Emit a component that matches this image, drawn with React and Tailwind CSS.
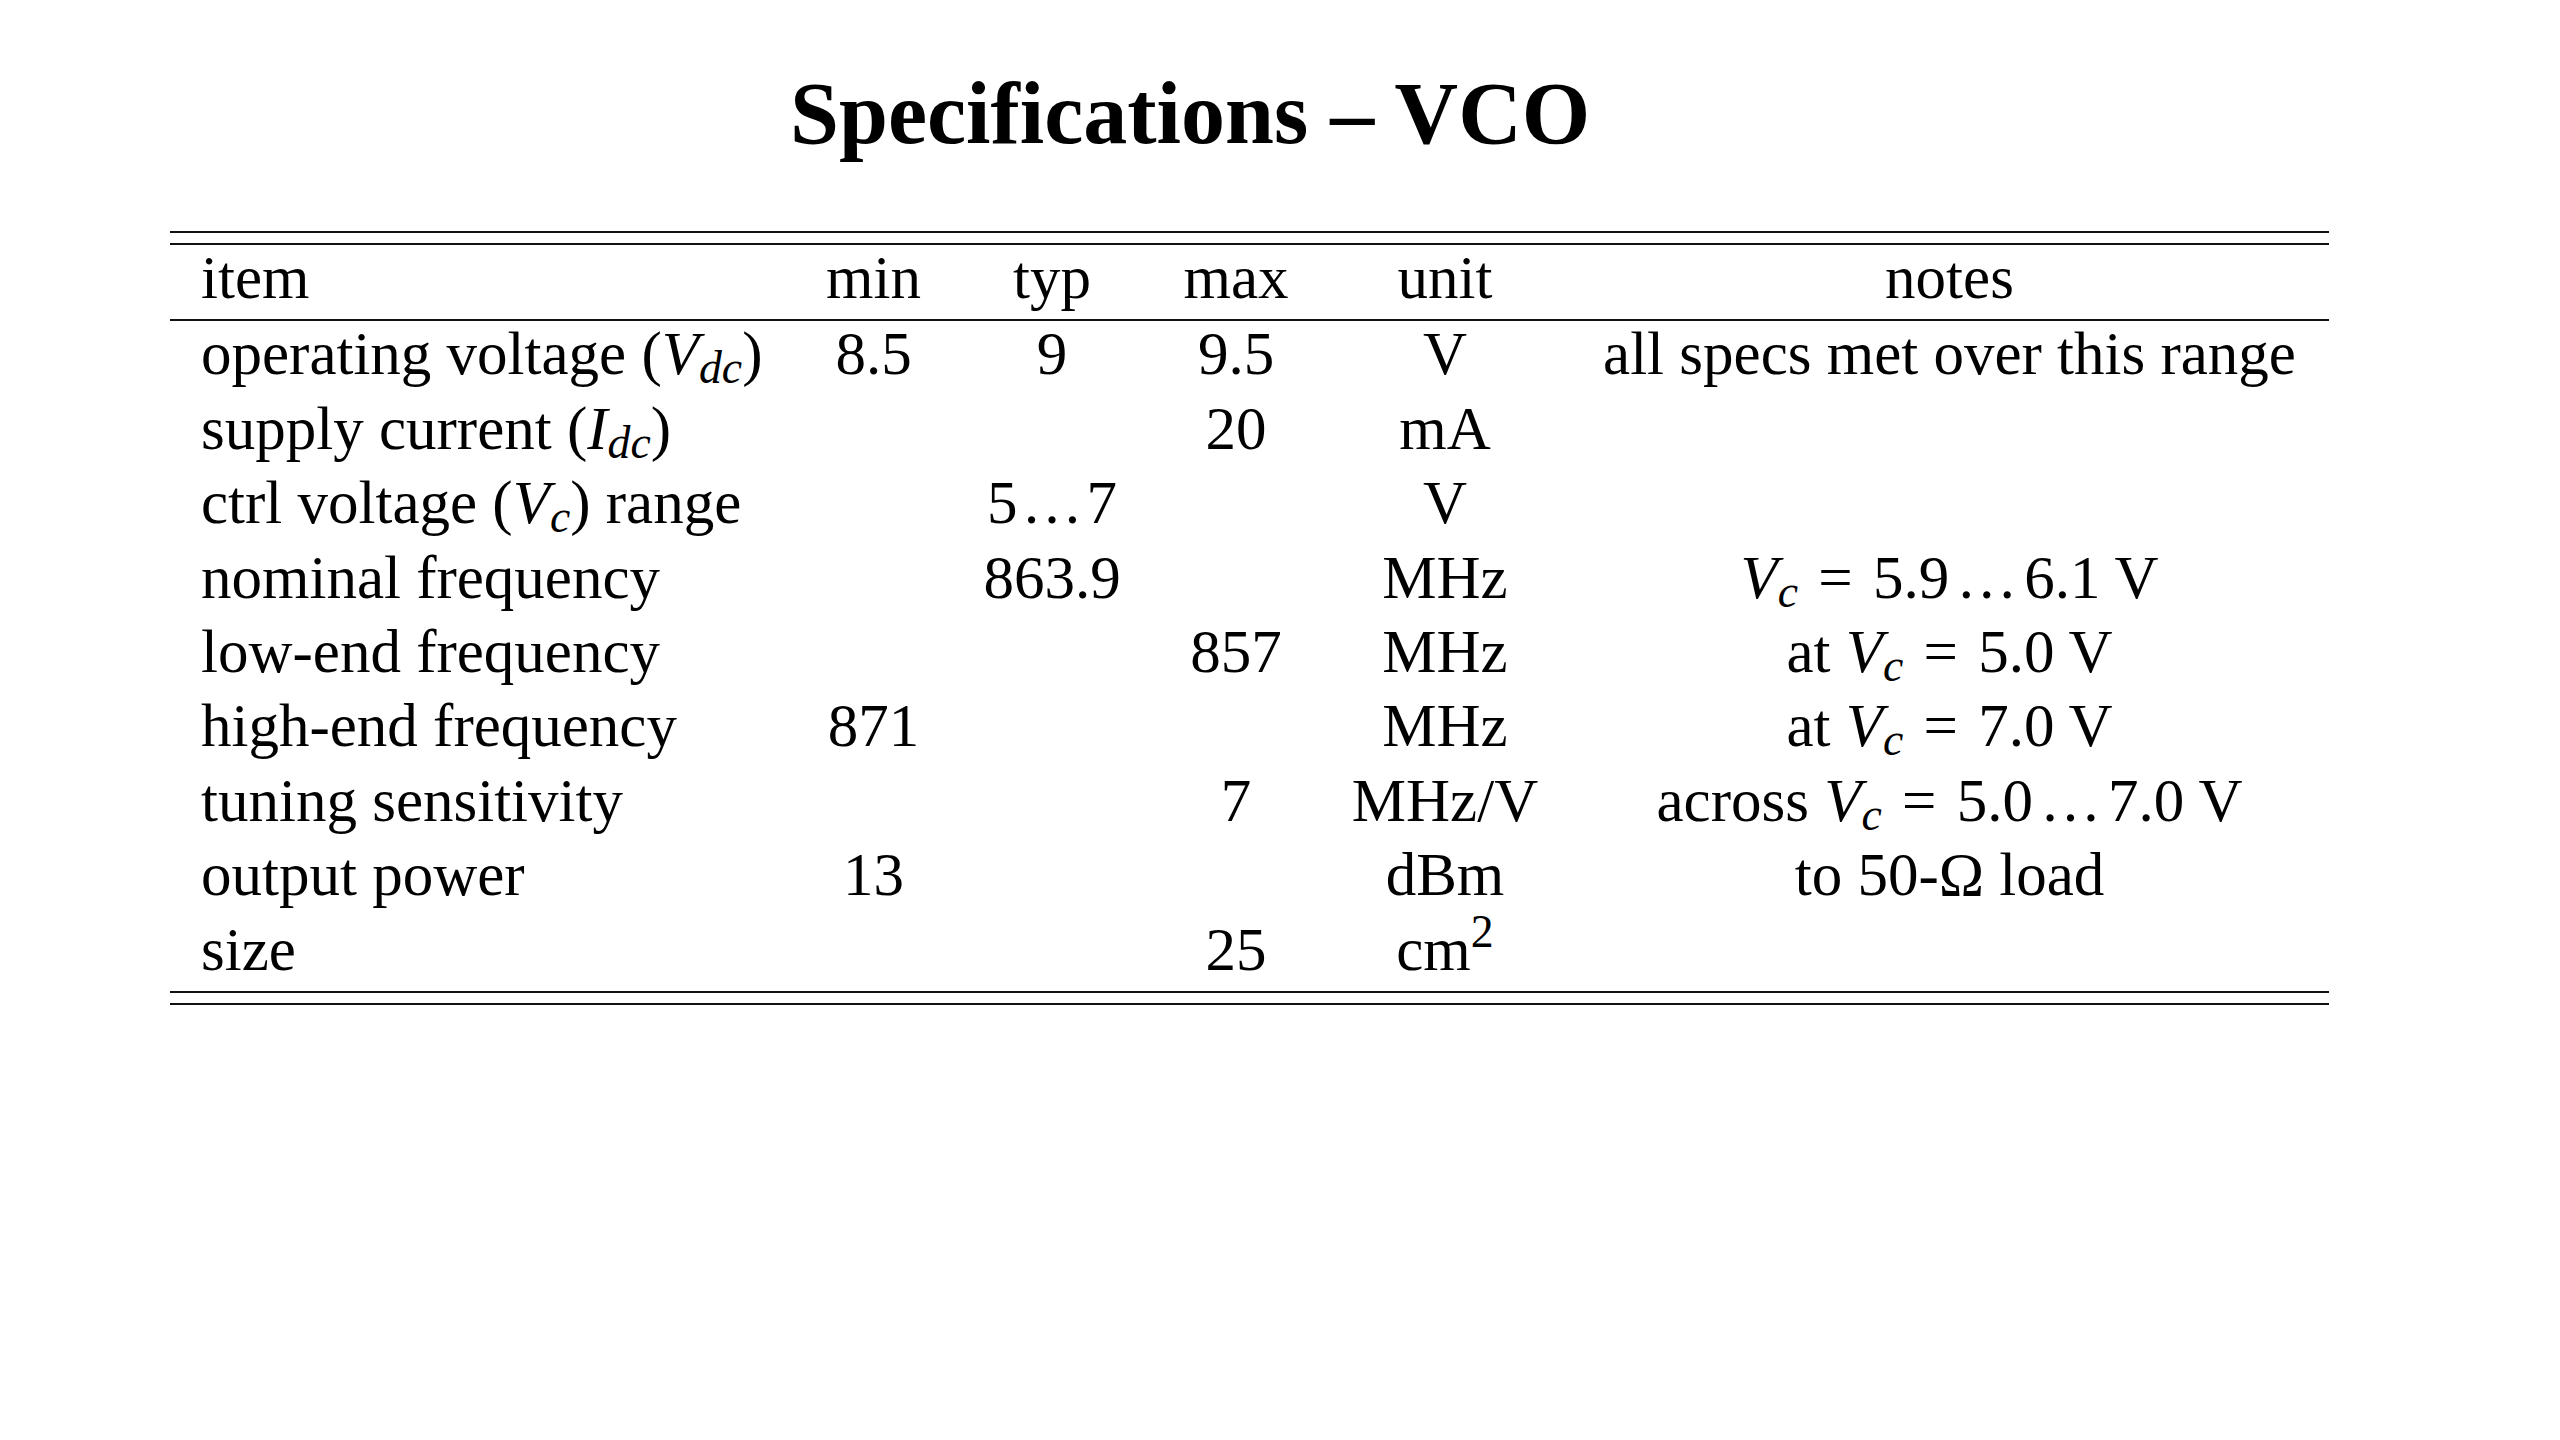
import React from 'react';

// V with an italic subscript, like $V_{dc}$
function Sym({ base, sub }) {
  return (
    <span className="italic">
      {base}
      <sub className="bottom-[-9px]">{sub}</sub>
    </span>
  );
}

const Dots = () => <span className="px-[4px]">…</span>;
// math-mode pieces: wider spacing round relations and \ldots
const MDots = () => <span className="px-[7px]">…</span>;
const Eq = () => <span className="px-[5px]">=</span>;

const rows = [
  {
    item: <>operating voltage (<Sym base="V" sub="dc" />)</>,
    min: '8.5', typ: '9', max: '9.5', unit: 'V',
    notes: 'all specs met over this range',
  },
  {
    item: <>supply current (<Sym base="I" sub="dc" />)</>,
    max: '20', unit: 'mA',
  },
  {
    item: <>ctrl voltage (<Sym base="V" sub="c" />) range</>,
    typ: <>5<Dots />7</>, unit: 'V',
  },
  {
    item: 'nominal frequency',
    typ: '863.9', unit: 'MHz',
    notes: <><Sym base="V" sub="c" /> <Eq /> 5.9<MDots />6.1 V</>,
  },
  {
    item: 'low-end frequency',
    max: '857', unit: 'MHz',
    notes: <>at <Sym base="V" sub="c" /> <Eq /> 5.0 V</>,
  },
  {
    item: 'high-end frequency',
    min: '871', unit: 'MHz',
    notes: <>at <Sym base="V" sub="c" /> <Eq /> 7.0 V</>,
  },
  {
    item: 'tuning sensitivity',
    max: '7', unit: 'MHz/V',
    notes: <>across <Sym base="V" sub="c" /> <Eq /> 5.0<MDots />7.0 V</>,
  },
  {
    item: 'output power',
    min: '13', unit: 'dBm',
    notes: 'to 50-Ω load',
  },
  {
    item: 'size',
    max: '25', unit: <>cm<sup>2</sup></>,
  },
];

const cols = 'grid grid-cols-[625px_157px_200px_168px_250px_759px] h-[74.4px] leading-[65px]';

function Rule() {
  return <div className="h-[2px] bg-[#111]" />;
}

function Row({ r }) {
  return (
    <div className={cols}>
      <div className="pl-[31px] whitespace-nowrap">{r.item}</div>
      <div className="text-center">{r.min}</div>
      <div className="text-center">{r.typ}</div>
      <div className="text-center">{r.max}</div>
      <div className="text-center whitespace-nowrap">{r.unit}</div>
      <div className="text-center whitespace-nowrap">{r.notes}</div>
    </div>
  );
}

export default function App() {
  return (
    <div className="w-[2560px] h-[1440px] bg-white text-black font-['Liberation_Serif','Times_New_Roman',serif]">
      <h1 className="pt-[70px] pl-[790px] text-[88px] leading-[88px] font-bold whitespace-nowrap">
        Specifications – VCO
      </h1>

      <div className="mt-[73px] ml-[170px] w-[2159px] flex flex-col text-[61px]">
        <Rule />
        <div className="h-[10px]" />
        <Rule />
        <Row r={{ item: 'item', min: 'min', typ: 'typ', max: 'max', unit: 'unit', notes: 'notes' }} />
        <Rule />
        {rows.map((r, i) => (
          <Row key={i} r={r} />
        ))}
        <Rule />
        <div className="h-[10px]" />
        <Rule />
      </div>
    </div>
  );
}
